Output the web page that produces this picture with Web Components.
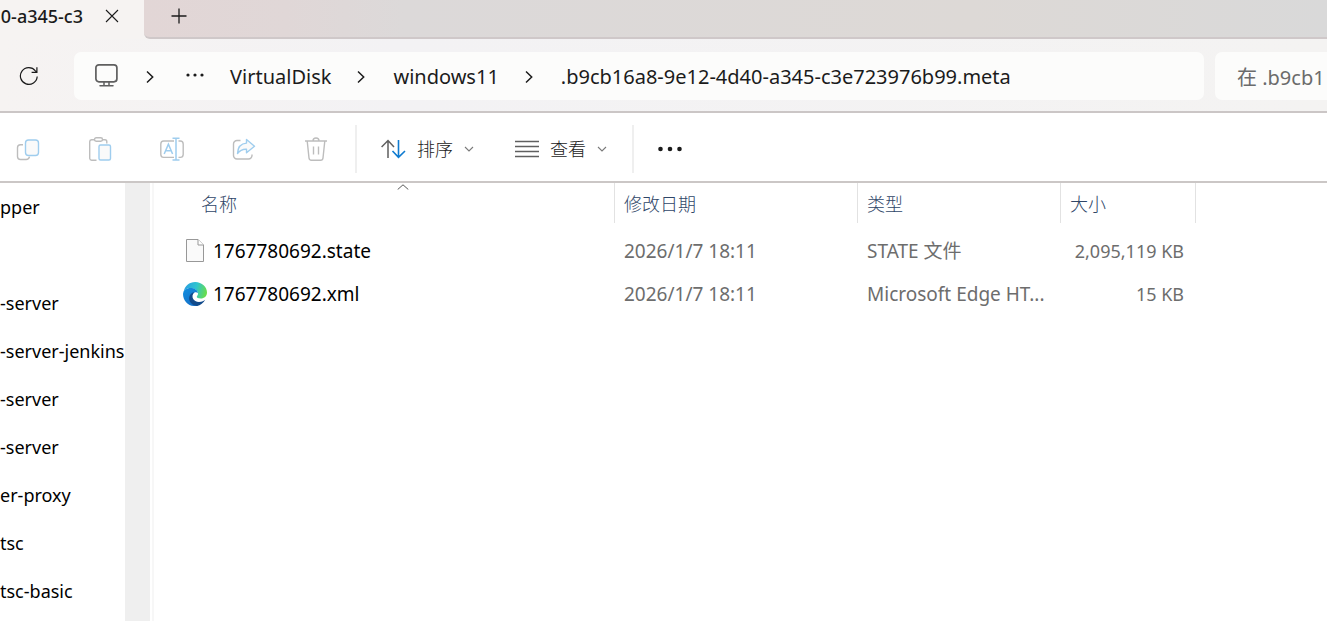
<!DOCTYPE html>
<html lang="zh-CN">
<head>
<meta charset="utf-8">
<title>.b9cb16a8-9e12-4d40-a345-c3e723976b99.meta</title>
<style>
    body {
        margin: 0;
        font-family: "Noto Sans", "Noto Sans CJK SC", sans-serif;
        color: #1b1b1b;
    }
</style>
</head>
<body>
<explorer-window>
    <tab-strip slot="tabs">0-a345-c3</tab-strip>
    <address-bar slot="address"></address-bar>
    <command-bar slot="commands"></command-bar>
    <nav-pane slot="nav"></nav-pane>
    <file-list slot="files"></file-list>
</explorer-window>

<script>
const icons = {
    close: [14, 14, '<path d="M1 1l12 12M13 1L1 13" stroke="#1b1b1b" stroke-width="1.1"/>'],
    plus: [16, 16, '<path d="M8 .5v15M.5 8h15" stroke="#1b1b1b" stroke-width="1.3"/>'],
    refresh: [20, 20, '<path d="M18.2 10.5A8.4 8.4 0 1 1 16.4 4.8L17.8 6.2M17.9 1.3V6.3H12.6" stroke="#1b1b1b" stroke-width="1.2"/>'],
    monitor: [24, 28, '<rect x="1.9" y="1.8" width="21" height="17" rx="3" stroke="#5f5f5f" stroke-width="1.7"/><path d="M10 19v3.500M15 19v3.500M6 22.700h13" stroke="#5f5f5f" stroke-width="1.5" stroke-linecap="round"/>'],
    right: [8, 14, '<path d="M1 1.5L6.700 7L1 12.5" stroke="#1b1b1b" stroke-width="1.5"/>'],
    more: [18, 10, '<g fill="#1b1b1b"><circle cx="2" cy="3" r="1.6"/><circle cx="9" cy="3" r="1.6"/><circle cx="16" cy="3" r="1.6"/></g>'],
    dots: [24, 6, '<g fill="#1b1b1b"><circle cx="2.5" cy="3" r="2.3"/><circle cx="12" cy="3" r="2.3"/><circle cx="21.5" cy="3" r="2.3"/></g>'],
    down: [10, 6, '<path d="M1 1l4 4l4-4" stroke="#7a7a7a" stroke-width="1.1"/>'],
    up: [12, 6, '<path d="M.7 5.5L6 .8l5.300 4.700" stroke="#5a5a5a" stroke-width="1"/>'],
    copy: [24, 24, '<path d="M7 7.7H4.500A3 3 0 0 0 1.500 10.700V19.500A3 3 0 0 0 4.500 22.500H10A3.500 3.500 0 0 0 13.500 19.700" stroke="#bdbdbd" stroke-width="1.4"/><rect x="9.5" y="3" width="13" height="15.5" rx="3" fill="#fafafa" stroke="#9fcdee" stroke-width="1.4"/>'],
    paste: [24, 24, '<path d="M7 2.8H3.500A2 2 0 0 0 1.700 4.800V21.500A2 2 0 0 0 3.700 23.200H8.500M14 2.800H17A1.800 1.800 0 0 1 18.800 4.600V6.500" stroke="#bdbdbd" stroke-width="1.4"/><rect x="6.5" y=".8" width="8" height="3.4" rx="1.7" stroke="#bdbdbd" stroke-width="1.4"/><rect x="11" y="8" width="11.5" height="15" rx="1.5" fill="#fafafa" stroke="#9fcdee" stroke-width="1.4"/>'],
    rename: [24, 24, '<path d="M14 4H3.700A3 3 0 0 0 .8 7V17.500A3 3 0 0 0 3.700 20.400H14M18.500 4H20.300A3 3 0 0 1 23.200 7V17.500A3 3 0 0 1 20.300 20.400H18.500" stroke="#bdbdbd" stroke-width="1.4"/><path d="M4.200 17L8.400 7.200L12.600 17M5.700 13.700H11.100M12.500 1.300H19.500M16 1.300V23M12.500 23H19.500" stroke="#9fcdee" stroke-width="1.5"/>'],
    share: [24, 24, '<path d="M8.5 3.500H5A3.500 3.500 0 0 0 1.500 7V18.500A3.500 3.500 0 0 0 5 22H16.500A3.500 3.500 0 0 0 20 18.500V17.500" stroke="#bdbdbd" stroke-width="1.4"/><path d="M14.500 2.500L22.500 9.200L14.500 15.800V12.300C10.500 12 8 13.300 5.500 16.500C5.800 10.500 9 6.400 14.500 6.100Z" fill="#fafafa" stroke="#9fcdee" stroke-width="1.4" stroke-linejoin="round"/>'],
    trash: [24, 24, '<path d="M1 4H23M9 4A3 3 0 0 1 15 4M3.200 4L5 21A2.400 2.400 0 0 0 7.400 23.200H16.600A2.400 2.400 0 0 0 19 21L20.800 4M9.500 9.500V17.500M14.500 9.500V17.500" stroke="#bdbdbd" stroke-width="1.4"/>'],
    sort: [25, 20, '<path d="M7 19V2M.6 8L7 1.500L13 8" stroke="#5f5f5f" stroke-width="1.5"/><path d="M17.500 1V18M11.500 12L17.500 18.300L24 12" stroke="#0f7bd0" stroke-width="1.6"/>'],
    view: [24, 18, '<path d="M0 1.500H24M0 6.500H24M0 11.500H24M0 16.500H24" stroke="#5f5f5f" stroke-width="1.3"/>'],
    file: [24, 24, '<path d="M3.500 .5H15L20.500 6V22.500H3.500Z" fill="#fafafa" stroke="#989898"/><path d="M15 .5V6H20.500" fill="#fff" stroke="#989898"/>'],
    edge: [24, 24, `
        <defs>
            <linearGradient id="top" x1="0" y1=".4" x2="1" y2=".6"><stop offset="0" stop-color="#2a9fe0"/><stop offset=".5" stop-color="#2fc4d0"/><stop offset="1" stop-color="#6ade45"/></linearGradient>
            <linearGradient id="mid" x1="0" y1="0" x2=".6" y2="1"><stop offset="0" stop-color="#128fe0"/><stop offset="1" stop-color="#1470c8"/></linearGradient>
        </defs>
        <path d="M.5 10.500C1.500 4 6.400 0 12.200 0C19 0 24 5.200 24 10.500C24 14.300 21.200 16.500 17.800 16.500C15 16.500 13.500 15.500 13.800 14.500C14.500 13.500 15 12.800 15 11.500C15 8.500 11.500 6 7.500 6C4.200 6 1.700 8 .5 10.500Z" fill="url(#top)"/>
        <path d="M0 12C.3 8.500 3.500 6 7.500 6C11.500 6 14.500 8 15 11C12 8.700 8.500 12 8.500 15.500C8.500 19.500 11.500 22.500 15.500 23.400C7 26 0 20 0 12Z" fill="url(#mid)"/>
        <path d="M11.200 10.200C7.300 14.500 10.500 20 16 20C19 20 21 18.700 22.200 17.800C20.500 21 17.500 23.400 14 23.900C9 23.500 5.700 19.700 6.200 15.500C6.600 12.500 8.500 10.500 11.200 10.200Z" fill="#114a8b"/>`]
};

class UiIcon extends HTMLElement {
    constructor() {
        super();
        this.attachShadow({ mode: 'open' });
    }

    connectedCallback() {
        const [w, h, body] = icons[this.getAttribute('name')];
        this.shadowRoot.innerHTML = `
            <style>
                :host { display: inline-flex; flex: none; }
                svg { display: block; }
            </style>
            <svg width="${w}" height="${h}" viewBox="0 0 ${w} ${h}" fill="none" aria-hidden="true">${body}</svg>
        `;
    }
}
customElements.define('ui-icon', UiIcon);

// resets shared by every element that holds controls
const base = `
    * { box-sizing: border-box; }
    button {
        display: flex;
        align-items: center;
        justify-content: center;
        margin: 0;
        padding: 0;
        border: 0;
        background: none;
        font: inherit;
        color: inherit;
    }
`;

class ExplorerWindow extends HTMLElement {
    constructor() {
        super();
        this.attachShadow({ mode: 'open' }).innerHTML = `
            <style>
                :host {
                    display: flex;
                    flex-direction: column;
                    height: 100vh;
                    overflow: hidden;
                    background: #fff;
                }
                main {
                    display: flex;
                    flex: 1;
                    min-height: 0;
                }
            </style>
            <slot name="tabs"></slot>
            <slot name="address"></slot>
            <slot name="commands"></slot>
            <main>
                <slot name="nav"></slot>
                <slot name="files"></slot>
            </main>
        `;
    }
}
customElements.define('explorer-window', ExplorerWindow);

class TabStrip extends HTMLElement {
    constructor() {
        super();
        this.attachShadow({ mode: 'open' }).innerHTML = `
            <style>
                ${base}
                :host {
                    display: flex;
                    height: 39px;
                    background: #f6f3f2;
                }
                .tab {
                    display: flex;
                    justify-content: flex-end;
                    gap: 22px;
                    width: 144px;
                    height: 31px;
                    padding-right: 25px;
                    font-size: 18px;
                    font-weight: 500;
                    align-items: center;
                    white-space: nowrap;
                }
                .rest {
                    flex: 1;
                    padding-left: 27px;
                    border-bottom: 2px solid #cfc8c9;
                    border-radius: 0 0 0 6px;
                    background: linear-gradient(90deg, #e2d6d6, #e0d7d7 12%, #dcd9d9 22%, #ddd9d6 70%, #d9d9d9);
                }
                .rest button { height: 31px; width: 16px; }
            </style>
            <div class="tab">
                <span><slot></slot></span>
                <button aria-label="关闭"><ui-icon name="close"></ui-icon></button>
            </div>
            <div class="rest">
                <button aria-label="新建"><ui-icon name="plus"></ui-icon></button>
            </div>
        `;
    }
}
customElements.define('tab-strip', TabStrip);

class AddressBar extends HTMLElement {
    constructor() {
        super();
        this.attachShadow({ mode: 'open' }).innerHTML = `
            <style>
                ${base}
                :host {
                    display: flex;
                    align-items: center;
                    height: 74px;
                    box-sizing: border-box;
                    padding: 2px 0 0 18px;
                    border-bottom: 2px solid #cbc6c6;
                    background: linear-gradient(90deg, #f6f3f2, #f3f2f4 30%, #f4f3f2);
                    font-size: 20px;
                    line-height: 28px;
                }
                .refresh { width: 22px; margin-right: 34px; }
                nav {
                    display: flex;
                    flex: 1;
                    align-items: center;
                    height: 48px;
                    padding: 2px 0 0 20px;
                    border-radius: 7px;
                    background: #fcfcfb;
                    white-space: nowrap;
                }
                nav > * { margin-right: 28px; }
                nav > .crumb { margin-right: 26px; }
                nav > .root { margin-right: 32px; }
                input {
                    width: 112px;
                    height: 48px;
                    margin-left: 11px;
                    padding: 2px 0 0 22px;
                    border: 0;
                    border-radius: 7px 0 0 7px;
                    background: #fcfcfb;
                    font: inherit;
                }
                input::placeholder { color: #6b6b6b; opacity: 1; }
            </style>
            <button class="refresh" aria-label="刷新"><ui-icon name="refresh"></ui-icon></button>
            <nav aria-label="地址">
                <button aria-label="此电脑"><ui-icon name="monitor"></ui-icon></button>
                <ui-icon class="root" name="right"></ui-icon>
                <button class="crumb" aria-label="更多"><ui-icon name="more"></ui-icon></button>
                <button class="crumb">VirtualDisk</button>
                <ui-icon name="right"></ui-icon>
                <button class="crumb">windows11</button>
                <ui-icon name="right"></ui-icon>
                <button class="crumb">.b9cb16a8-9e12-4d40-a345-c3e723976b99.meta</button>
            </nav>
            <input type="text" aria-label="搜索" placeholder="在 .b9cb1">
        `;
    }
}
customElements.define('address-bar', AddressBar);

class CommandBar extends HTMLElement {
    constructor() {
        super();
        this.attachShadow({ mode: 'open' }).innerHTML = `
            <style>
                ${base}
                :host {
                    display: flex;
                    align-items: center;
                    height: 70px;
                    box-sizing: border-box;
                    padding-top: 4px;
                    border-bottom: 2px solid #cbc7c6;
                    font-size: 18px;
                    line-height: 24px;
                }
                .group { display: flex; gap: 16px; }
                .group button { width: 56px; height: 48px; }
                .line {
                    width: 2px;
                    height: 48px;
                    margin: 0 24px 0 11px;
                    background: #efefef;
                }
                .menu { gap: 11px; height: 48px; font-weight: 300; }
                .menu + .menu { margin: 0 14px 0 41px; }
            </style>
            <div class="group">
                <button disabled aria-label="复制"><ui-icon name="copy"></ui-icon></button>
                <button disabled aria-label="粘贴"><ui-icon name="paste"></ui-icon></button>
                <button disabled aria-label="重命名"><ui-icon name="rename"></ui-icon></button>
                <button disabled aria-label="共享"><ui-icon name="share"></ui-icon></button>
                <button disabled aria-label="删除"><ui-icon name="trash"></ui-icon></button>
            </div>
            <div class="line"></div>
            <button class="menu"><ui-icon name="sort"></ui-icon>排序<ui-icon name="down"></ui-icon></button>
            <button class="menu"><ui-icon name="view"></ui-icon>查看<ui-icon name="down"></ui-icon></button>
            <div class="line"></div>
            <button aria-label="更多选项"><ui-icon name="dots"></ui-icon></button>
        `;
    }
}
customElements.define('command-bar', CommandBar);

class NavPane extends HTMLElement {
    constructor() {
        super();
        this.attachShadow({ mode: 'open' });
        this.items = ['pper', '', '-server', '-server-jenkins', '-server', '-server', 'er-proxy', 'tsc', 'tsc-basic'];
        this.render();
    }

    render() {
        this.shadowRoot.innerHTML = `
            <style>
                :host {
                    display: flex;
                    flex: none;
                    width: 152px;
                    border-right: 2px solid #f7f7f7;
                    font-size: 18px;
                    line-height: 48px;
                    color: #000;
                }
                ul {
                    flex: 1;
                    margin: 0;
                    padding: 0;
                    overflow: hidden;
                    list-style: none;
                    white-space: nowrap;
                }
                li { height: 48px; }
                a { color: inherit; text-decoration: none; }
                .scroll {
                    width: 25px;
                    margin-right: 2px;
                    background: #efefef;
                }
            </style>
            <ul>${this.items.map(t => `<li>${t ? `<a href="#">${t}</a>` : ''}</li>`).join('')}</ul>
            <div class="scroll"></div>
        `;
    }
}
customElements.define('nav-pane', NavPane);

class FileList extends HTMLElement {
    constructor() {
        super();
        this.attachShadow({ mode: 'open' });
        this.files = [
            ['file', '1767780692.state', '2026/1/7 18:11', 'STATE 文件', '2,095,119 KB'],
            ['edge', '1767780692.xml', '2026/1/7 18:11', 'Microsoft Edge HT...', '15 KB']
        ];
        this.render();
    }

    render() {
        const rows = this.files.map(([icon, name, date, type, size]) => `
            <tr>
                <td><div class="name"><ui-icon name="${icon}"></ui-icon>${name}</div></td>
                <td>${date}</td>
                <td>${type}</td>
                <td class="size">${size}</td>
            </tr>
        `).join('');

        this.shadowRoot.innerHTML = `
            <style>
                ${base}
                :host {
                    display: block;
                    flex: 1;
                    min-width: 0;
                    overflow: hidden;
                    font-size: 18px;
                    line-height: 24px;
                }
                table {
                    width: 1042px;
                    table-layout: fixed;
                    border-collapse: collapse;
                }
                th { padding: 0 0 6px; font-weight: 300; color: #2f4668; }
                th button {
                    position: relative;
                    justify-content: flex-start;
                    width: 100%;
                    height: 40px;
                    padding: 2px 0 0 9px;
                    border-right: 1px solid #e2e2e2;
                }
                th:first-child button { padding-left: 47px; }
                .caret {
                    position: absolute;
                    top: 1px;
                    left: 47px;
                    right: 9px;
                    justify-content: center;
                }
                td {
                    height: 43px;
                    padding: 0 0 0 9px;
                    font-size: 19px;
                    color: #6d6d6d;
                    white-space: nowrap;
                }
                td:first-child { padding-left: 29px; color: #000; }
                .name { display: flex; align-items: center; gap: 6px; }
                td.size { padding-right: 12px; font-size: 18px; text-align: right; }
            </style>
            <table>
                <colgroup>
                    <col style="width: 461px"><col style="width: 243px"><col style="width: 203px"><col style="width: 135px">
                </colgroup>
                <thead>
                    <tr>
                        <th aria-sort="ascending"><button>名称<ui-icon class="caret" name="up"></ui-icon></button></th>
                        <th><button>修改日期</button></th>
                        <th><button>类型</button></th>
                        <th><button>大小</button></th>
                    </tr>
                </thead>
                <tbody>${rows}</tbody>
            </table>
        `;
    }
}
customElements.define('file-list', FileList);
</script>
</body>
</html>
